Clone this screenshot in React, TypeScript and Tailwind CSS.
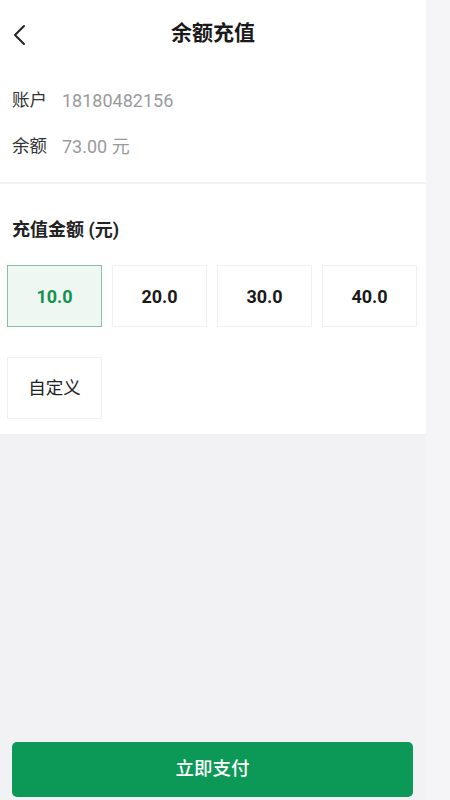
import { useState } from "react"

const amounts = ["10.0", "20.0", "30.0", "40.0"]

export default function App() {
  const [selected, setSelected] = useState("10.0")

  return (
    <div
      className="flex h-[800px] w-full bg-[#f5f5f8]"
      style={{ fontFamily: '"Roboto", "Noto Sans CJK SC", sans-serif' }}
    >
      <div className="flex w-[426px] flex-col bg-[#f2f1f4]">
        <div className="bg-white">
          {/* header */}
          <div className="relative flex h-[68px] items-center justify-center">
            <button className="absolute left-[10px] top-[22px] p-[2px]">
              <svg width="14" height="22" viewBox="0 0 14 22" fill="none">
                <path d="M12 2 L3 11 L12 20" stroke="#222" strokeWidth="2" strokeLinecap="round" strokeLinejoin="round" />
              </svg>
            </button>
            <h1 className="text-[21px] font-bold text-[#1a1a1a]">余额充值</h1>
          </div>

          {/* account info */}
          <div className="px-[12px] pb-[13px] pt-[9px]">
            <div className="flex h-[46px] items-center gap-[15px]">
              <span className="text-[17.5px] text-[#333]">账户</span>
              <span className="text-[18px] text-[#9a9a9e]">18180482156</span>
            </div>
            <div className="flex h-[46px] items-center gap-[15px]">
              <span className="text-[17.5px] text-[#333]">余额</span>
              <span className="text-[18px] text-[#9a9a9e]">73.00 元</span>
            </div>
          </div>
          <div className="h-[2px] bg-[#f2f2f4]" />

          {/* amounts */}
          <div className="px-[7px] pb-[15px] pt-[30px]">
            <div className="flex h-[30px] items-center px-[5px] text-[18px] font-bold text-[#222]">充值金额 (元)</div>
            <div className="mt-[21px] grid grid-cols-4 gap-[10px] pr-[2px]">
              {amounts.map((a) => (
                <button
                  key={a}
                  onClick={() => setSelected(a)}
                  className={
                    a === selected
                      ? "flex h-[62px] items-center justify-center border border-[#86c3a4] bg-[#eef7f2] text-[18px] font-bold text-[#16924f]"
                      : "flex h-[62px] items-center justify-center border border-[#f0f0f2] bg-white text-[18px] font-bold text-[#1a1a1a]"
                  }
                >
                  {a}
                </button>
              ))}
            </div>
            <div className="mt-[30px] grid grid-cols-4 gap-[10px] pr-[2px]">
              <button className="flex h-[62px] items-center justify-center border border-[#f0f0f2] bg-white text-[17.5px] text-[#222]">
                自定义
              </button>
            </div>
          </div>
        </div>

        <div className="flex flex-1 flex-col justify-end px-[12px] pb-[3px]">
          <button className="flex h-[55px] w-[401px] items-center justify-center rounded-[5px] bg-[#0c9856] text-[18.5px] font-medium text-white">
            立即支付
          </button>
        </div>
      </div>
      <div className="flex-1" />
    </div>
  )
}
